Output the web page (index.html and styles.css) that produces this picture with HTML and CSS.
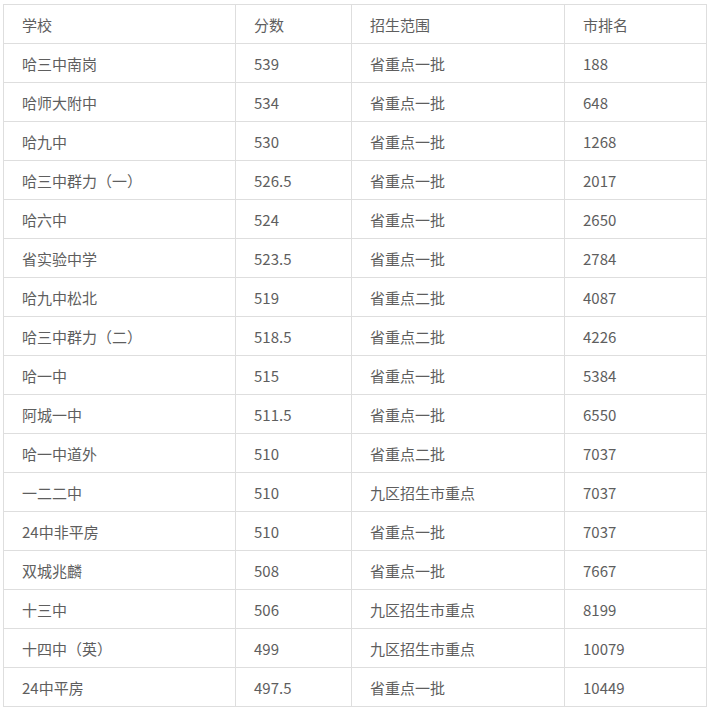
FILE: index.html
```html
<!DOCTYPE html>
<html lang="zh">
<head>
<meta charset="utf-8">
<link rel="stylesheet" href="styles.css">
</head>
<body>
<div class="wrap">
<table class="rank">
<colgroup><col class="c1"><col class="c2"><col class="c3"><col class="c4"></colgroup>
<tr><td>学校</td><td>分数</td><td>招生范围</td><td>市排名</td></tr>
<tr><td>哈三中南岗</td><td>539</td><td>省重点一批</td><td>188</td></tr>
<tr><td>哈师大附中</td><td>534</td><td>省重点一批</td><td>648</td></tr>
<tr><td>哈九中</td><td>530</td><td>省重点一批</td><td>1268</td></tr>
<tr><td>哈三中群力（一）</td><td>526.5</td><td>省重点一批</td><td>2017</td></tr>
<tr><td>哈六中</td><td>524</td><td>省重点一批</td><td>2650</td></tr>
<tr><td>省实验中学</td><td>523.5</td><td>省重点一批</td><td>2784</td></tr>
<tr><td>哈九中松北</td><td>519</td><td>省重点二批</td><td>4087</td></tr>
<tr><td>哈三中群力（二）</td><td>518.5</td><td>省重点二批</td><td>4226</td></tr>
<tr><td>哈一中</td><td>515</td><td>省重点一批</td><td>5384</td></tr>
<tr><td>阿城一中</td><td>511.5</td><td>省重点一批</td><td>6550</td></tr>
<tr><td>哈一中道外</td><td>510</td><td>省重点二批</td><td>7037</td></tr>
<tr><td>一二二中</td><td>510</td><td>九区招生市重点</td><td>7037</td></tr>
<tr><td>24中非平房</td><td>510</td><td>省重点一批</td><td>7037</td></tr>
<tr><td>双城兆麟</td><td>508</td><td>省重点一批</td><td>7667</td></tr>
<tr><td>十三中</td><td>506</td><td>九区招生市重点</td><td>8199</td></tr>
<tr><td>十四中（英）</td><td>499</td><td>九区招生市重点</td><td>10079</td></tr>
<tr><td>24中平房</td><td>497.5</td><td>省重点一批</td><td>10449</td></tr>
</table>
</div>
</body>
</html>
```
FILE: styles.css
```css
html, body {
  margin: 0;
  padding: 0;
  background: #fff;
}
.wrap {
  padding: 4px 0 0 3px;
}
.rank {
  border-collapse: collapse;
  table-layout: fixed;
  width: 703px;
  font-family: "Microsoft YaHei", "Noto Sans CJK SC", "Noto Sans", sans-serif;
  font-size: 15px;
  color: #5e5e5e;
}
.c1 { width: 232px; }
.c2 { width: 116px; }
.c3 { width: 213px; }
.c4 { width: 142px; }
.rank td {
  border: 1px solid #dedede;
  height: 39px;
  padding: 2px 0 0 18px;
  box-sizing: border-box;
  vertical-align: middle;
  line-height: 20px;
  white-space: nowrap;
}
```
